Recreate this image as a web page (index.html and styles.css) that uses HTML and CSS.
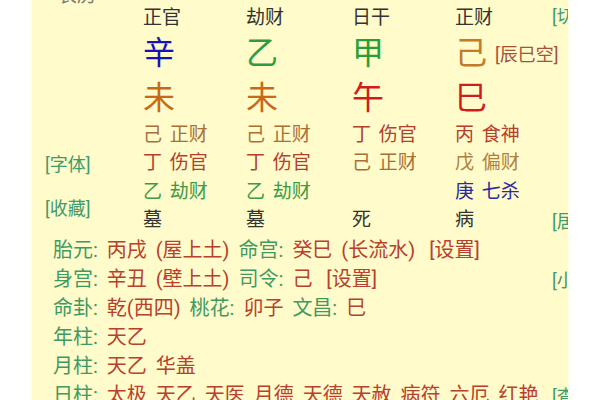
FILE: index.html
```html
<!DOCTYPE html>
<html lang="zh-CN">
<head>
<meta charset="utf-8">
<title>八字排盘</title>
<link rel="stylesheet" href="styles.css">
</head>
<body>
<div class="panel">
  <div class="chart">
    <div class="cell lab top-lab"><span class="faint">农历</span></div>
    <div class="cell god">正官</div>
    <div class="cell god">劫财</div>
    <div class="cell god">日干</div>
    <div class="cell god">正财</div>
    <div class="cell side">[切换]</div>

    <div class="cell"></div>
    <div class="cell big c-blue">辛</div>
    <div class="cell big c-green">乙</div>
    <div class="cell big c-green2">甲</div>
    <div class="cell big-wrap"><span class="big c-earth">己</span><span class="kong">[辰巳空]</span></div>
    <div class="cell"></div>

    <div class="cell"></div>
    <div class="cell big c-orange">未</div>
    <div class="cell big c-orange">未</div>
    <div class="cell big c-red">午</div>
    <div class="cell big c-red">巳</div>
    <div class="cell"></div>

    <div class="cell"></div>
    <div class="cell hid c-earth2">己 正财</div>
    <div class="cell hid c-earth2">己 正财</div>
    <div class="cell hid c-fire">丁 伤官</div>
    <div class="cell hid c-fire">丙 食神</div>
    <div class="cell"></div>

    <div class="cell lab">[字体]</div>
    <div class="cell hid c-fire">丁 伤官</div>
    <div class="cell hid c-fire">丁 伤官</div>
    <div class="cell hid c-earth2">己 正财</div>
    <div class="cell hid c-earth3">戊 偏财</div>
    <div class="cell"></div>

    <div class="cell lab lab-span">[收藏]</div>
    <div class="cell hid c-wood">乙 劫财</div>
    <div class="cell hid c-wood">乙 劫财</div>
    <div class="cell hid"></div>
    <div class="cell hid c-metal">庚 七杀</div>
    <div class="cell"></div>

    <div class="cell hid c-dark">墓</div>
    <div class="cell hid c-dark">墓</div>
    <div class="cell hid c-dark">死</div>
    <div class="cell hid c-dark">病</div>
    <div class="cell side">[居中]</div>
  </div>

  <div class="info">
    <div class="line"><span class="k">胎元:</span> <span class="v">丙戌 (屋上土)</span> <span class="k">命宫:</span> <span class="v">癸巳 (长流水)</span> <span class="v set">[设置]</span></div>
    <div class="side"></div>
    <div class="line"><span class="k">身宫:</span> <span class="v">辛丑 (壁上土)</span> <span class="k">司令:</span> <span class="v">己</span> <span class="v set">[设置]</span></div>
    <div class="side">[小字]</div>
    <div class="line"><span class="k">命卦:</span> <span class="v">乾(西四)</span> <span class="k">桃花:</span> <span class="v">卯子</span> <span class="k">文昌:</span> <span class="v">巳</span></div>
    <div class="side"></div>
    <div class="line"><span class="k">年柱:</span> <span class="v">天乙</span></div>
    <div class="side"></div>
    <div class="line"><span class="k">月柱:</span> <span class="v">天乙 华盖</span></div>
    <div class="side"></div>
    <div class="line"><span class="k">日柱:</span> <span class="v">太极 天乙 天医 月德 天德 天赦 病符 六厄 红艳</span></div>
    <div class="side">[查看]</div>
  </div>
</div>
</body>
</html>
```

FILE: styles.css
```css
html, body {
  margin: 0;
  padding: 0;
  background: #ffffff;
}

body {
  font-family: Roboto, "Noto Sans CJK SC", sans-serif;
  width: 600px;
  height: 400px;
  overflow: hidden;
}

.panel {
  margin-left: 32px;
  width: 536px;
  height: 400px;
  box-sizing: border-box;
  padding-left: 13px;
  background: #fffbca;
  overflow: hidden;
  box-shadow: 0 0 3px 1px rgba(255, 251, 202, 0.7);
}

.chart {
  display: grid;
  grid-template-columns: 98px 103px 106px 103px 97px 40px;
  grid-template-rows: 30px 46px 44px 28.5px 28.5px 28.5px 28.5px;
  width: 547px;
}

.cell {
  display: flex;
  align-items: center;
  white-space: nowrap;
}

.god {
  font-size: 19px;
  color: #333333;
  padding-top: 1px;
}

.big {
  font-size: 32px;
  line-height: 1;
}

.big-wrap {
  gap: 8px;
}

.kong {
  font-size: 18px;
  color: #a4523a;
}

.hid {
  font-size: 19px;
  line-height: 1;
  word-spacing: 3px;
}

.lab {
  font-size: 18px;
  color: #3f9a6c;
}

.lab-span {
  grid-row: span 2;
  padding-top: 3px;
}

.top-lab {
  align-items: flex-start;
}

.faint {
  color: #7a7a70;
  font-size: 19px;
  line-height: 19px;
  margin-top: -14px;
  margin-left: 13px;
}

.side {
  font-size: 18px;
  color: #3f9a6c;
  white-space: nowrap;
  display: flex;
  align-items: center;
}

.info {
  display: grid;
  grid-template-columns: 499px 40px;
  grid-auto-rows: 29px;
  padding-left: 8px;
  padding-top: 1.5px;
  width: 547px;
}

.line {
  font-size: 20px;
  line-height: 29px;
  white-space: nowrap;
  word-spacing: 4px;
}

.k {
  color: #3f9a62;
}

.v {
  color: #b8402e;
}

.set {
  margin-left: 5px;
}

.c-blue { color: #1414b8; }
.c-green { color: #2f9a3e; }
.c-green2 { color: #26a035; }
.c-earth { color: #c47a26; }
.c-orange { color: #c66a18; }
.c-red { color: #cf1d1d; }
.c-earth2 { color: #a87038; }
.c-earth3 { color: #b08040; }
.c-fire { color: #b4402c; }
.c-wood { color: #3c9a48; }
.c-metal { color: #2a2aa0; }
.c-dark { color: #333333; }
```
